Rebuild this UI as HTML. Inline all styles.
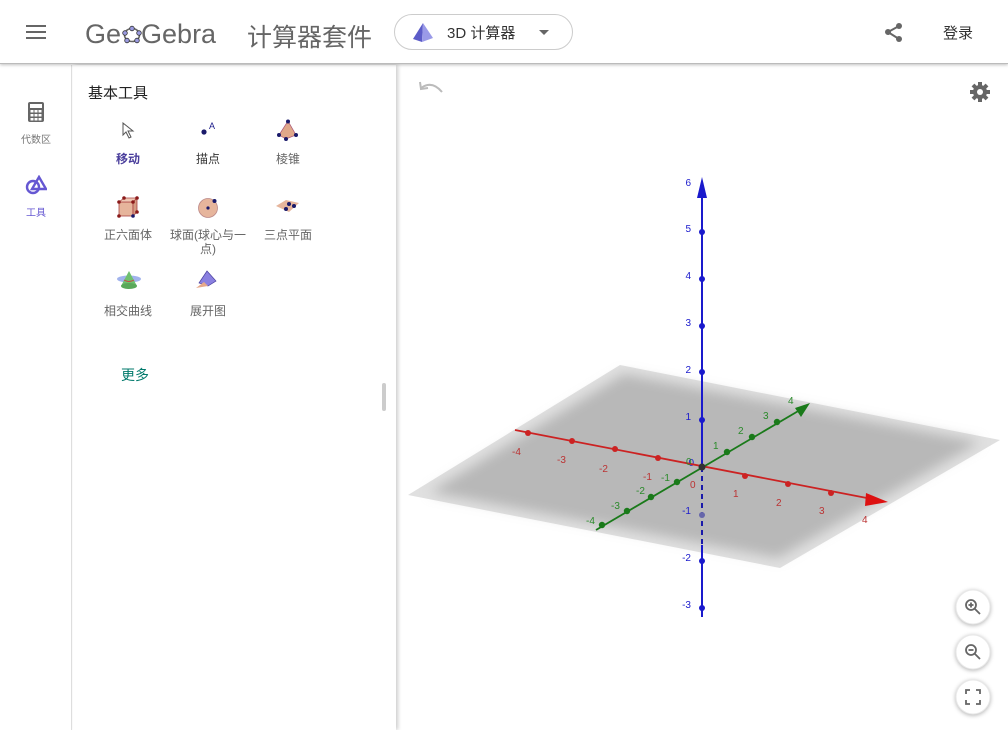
<!DOCTYPE html>
<html><head><meta charset="utf-8"><style>
*{margin:0;padding:0;box-sizing:border-box}
body{width:1008px;height:730px;overflow:hidden;background:#fff;font-family:"Liberation Sans","Noto Sans CJK SC",sans-serif;position:relative}
.hdr{position:absolute;left:0;top:0;width:1008px;height:64px;background:#fff;border-bottom:1px solid #bbb;box-shadow:0 1px 3px rgba(0,0,0,.25);z-index:5}
.abs{position:absolute}
.rail{position:absolute;left:0;top:65px;width:72px;height:665px;background:#fff;border-right:1px solid #e0e0e0}
.panel{position:absolute;left:73px;top:65px;width:323px;height:665px;background:#fff;box-shadow:2px 0 4px rgba(0,0,0,.2)}
.tl{position:absolute;font-size:12px;color:#666;text-align:center;width:80px;line-height:14px}
</style></head><body>
<div class="hdr">
 <div class="abs" style="left:26px;top:25px;width:20px;height:2px;background:#666"></div>
 <div class="abs" style="left:26px;top:31px;width:20px;height:2px;background:#666"></div>
 <div class="abs" style="left:26px;top:37px;width:20px;height:2px;background:#666"></div>
 <div class="abs" style="left:85px;top:21px;font-size:27px;line-height:27px;color:#666;white-space:nowrap">Ge<span style="display:inline-block;width:20px"></span>Gebra</div>
 <svg class="abs" style="left:121px;top:23px" width="22" height="22"><ellipse cx="11" cy="12" rx="7.5" ry="6.5" fill="none" stroke="#666" stroke-width="1.6"/><g fill="#9a9ae0" stroke="#333" stroke-width=".8"><circle cx="11" cy="5.5" r="2.3"/><circle cx="4" cy="10" r="2.3"/><circle cx="18" cy="10" r="2.3"/><circle cx="6" cy="17.5" r="2.3"/><circle cx="16" cy="17.5" r="2.3"/></g></svg>
 <div class="abs" style="left:247px;top:18px;font-size:25px;color:#666">计算器套件</div>
 <div class="abs" style="left:394px;top:14px;width:179px;height:36px;border:1px solid #ccc;border-radius:18px"></div>
 <svg class="abs" style="left:410px;top:21px" width="26" height="22"><polygon points="13,2 3,18 12,21" fill="#5c5cc8"/><polygon points="13,2 12,21 23,17" fill="#9a9ae8"/></svg>
 <div class="abs" style="left:447px;top:22px;font-size:15px;color:#333">3D 计算器</div>
 <div class="abs" style="left:539px;top:30px;border-left:5px solid transparent;border-right:5px solid transparent;border-top:5px solid #666"></div>
 <svg class="abs" style="left:884px;top:22px" width="22" height="22" fill="#666"><circle cx="15" cy="4" r="3"/><circle cx="4" cy="10" r="3"/><circle cx="15" cy="17" r="3"/><path d="M15 4L4 10L15 17" stroke="#666" stroke-width="2" fill="none"/></svg>
 <div class="abs" style="left:943px;top:22px;font-size:15px;color:#333">登录</div>
</div>
<div class="rail">
 <svg class="abs" style="left:28px;top:37px" width="16" height="20"><rect x="0" y="0" width="16" height="20" rx="2" fill="#666"/><rect x="2" y="2" width="12" height="4" fill="#fff"/><g fill="#fff"><rect x="2.5" y="8" width="3" height="2.5"/><rect x="6.5" y="8" width="3" height="2.5"/><rect x="10.5" y="8" width="3" height="2.5"/><rect x="2.5" y="12" width="3" height="2.5"/><rect x="6.5" y="12" width="3" height="2.5"/><rect x="10.5" y="12" width="3" height="2.5"/><rect x="2.5" y="16" width="3" height="2.5"/><rect x="6.5" y="16" width="3" height="2.5"/><rect x="10.5" y="16" width="3" height="2.5"/></g></svg>
 <div class="abs" style="left:0;top:66px;width:72px;text-align:center;font-size:10px;color:#777">代数区</div>
 <svg class="abs" style="left:25px;top:110px" width="22" height="20" stroke="#6557d2" stroke-width="2.4" fill="none"><circle cx="8" cy="12" r="6"/><polygon points="14,2 21,14 7,14"/></svg>
 <div class="abs" style="left:0;top:139px;width:72px;text-align:center;font-size:10px;color:#6557d2">工具</div>
</div>
<div class="panel">
 <div class="abs" style="left:15px;top:17px;font-size:15px;color:#222">基本工具</div>
 <svg class="abs" style="left:49px;top:57px" width="14" height="18"><path d="M1 1L1 13L4 10L7 16L9 15L6 9L11 9Z" fill="#fff" stroke="#555" stroke-width="1"/></svg>
 <div class="tl" style="left:15px;top:87px;color:#4a3e9c;font-weight:bold">移动</div>
 <svg class="abs" style="left:125px;top:55px" width="20" height="20"><circle cx="6" cy="12" r="2.6" fill="#1a1a6a"/><text x="11" y="9" font-size="9" fill="#1a1a8a" font-family="Liberation Sans">A</text></svg>
 <div class="tl" style="left:95px;top:87px;color:#333">描点</div>
 <svg class="abs" style="left:203px;top:54px" width="24" height="22"><polygon points="12,2 3,16 10,20 20,16" fill="#e0a88a" stroke="#a57" stroke-width=".7"/><circle cx="12" cy="2.5" r="2" fill="#1a1a6a"/><circle cx="3" cy="16" r="2" fill="#1a1a6a"/><circle cx="10" cy="20" r="2" fill="#1a1a6a"/><circle cx="20" cy="16" r="2" fill="#1a1a6a"/></svg>
 <div class="tl" style="left:175px;top:87px">棱锥</div>
 <svg class="abs" style="left:43px;top:131px" width="24" height="22"><rect x="3" y="6" width="14" height="14" fill="#e6b59c" stroke="#a44" stroke-width=".8"/><polygon points="3,6 8,2 21,2 17,6" fill="#efc8b4" stroke="#a44" stroke-width=".8"/><polygon points="17,6 21,2 21,16 17,20" fill="#d49c84" stroke="#a44" stroke-width=".8"/><g fill="#8a1a1a"><circle cx="3" cy="6" r="1.8"/><circle cx="8" cy="2" r="1.8"/><circle cx="21" cy="2" r="1.8"/><circle cx="17" cy="6" r="1.8"/><circle cx="3" cy="20" r="1.8"/><circle cx="21" cy="16" r="1.8"/></g><circle cx="17" cy="20" r="1.8" fill="#1a1a6a"/></svg>
 <div class="tl" style="left:15px;top:163px">正六面体</div>
 <svg class="abs" style="left:124px;top:131px" width="24" height="22"><circle cx="11" cy="12" r="9.5" fill="#e6b59c" stroke="#b88" stroke-width=".8"/><circle cx="11" cy="12" r="1.6" fill="#1a1a6a"/><circle cx="17.5" cy="5" r="2" fill="#1a1a6a"/></svg>
 <div class="tl" style="left:95px;top:163px">球面(球心与一<br>点)</div>
 <svg class="abs" style="left:202px;top:133px" width="26" height="16"><polygon points="1,8 11,2 24,5 14,14" fill="#e6b59c"/><circle cx="11" cy="11" r="2" fill="#1a1a6a"/><circle cx="14" cy="6" r="2" fill="#1a1a6a"/><circle cx="19" cy="8" r="2" fill="#1a1a6a"/></svg>
 <div class="tl" style="left:175px;top:163px">三点平面</div>
 <svg class="abs" style="left:43px;top:205px" width="26" height="22"><ellipse cx="13" cy="9" rx="12" ry="3.5" fill="#8aa0e8" opacity=".8"/><polygon points="13,1 5,16 21,16" fill="#6fbf6f"/><ellipse cx="13" cy="16" rx="8" ry="3" fill="#5aa85a"/><path d="M8 10Q13 13 18 10" stroke="#c44" fill="none"/></svg>
 <div class="tl" style="left:15px;top:239px">相交曲线</div>
 <svg class="abs" style="left:121px;top:204px" width="26" height="22"><polygon points="13,2 5,14 14,17 22,12" fill="#8a80e0" stroke="#4a40a0" stroke-width=".7"/><polygon points="2,19 10,13 14,17" fill="#e6a88a"/><polygon points="22,12 26,8 18,16" fill="#e6a88a"/></svg>
 <div class="tl" style="left:95px;top:239px">展开图</div>
 <div class="abs" style="left:48px;top:300px;font-size:14px;color:#00796b">更多</div>
 <div class="abs" style="left:309px;top:318px;width:4px;height:28px;background:#ccc;border-radius:2px"></div>
</div>
<svg class="abs" style="left:0;top:0" width="1008" height="730">
 <defs><filter id="bl" x="-20%" y="-20%" width="140%" height="140%"><feGaussianBlur stdDeviation="6"/></filter></defs>
 <path d="M421 88 Q432 80 442 92" stroke="#bbb" stroke-width="2" fill="none"/><path d="M420 82 L421 89 L428 88" stroke="#bbb" stroke-width="2" fill="none"/>
 <g transform="translate(980,92)" fill="#666"><circle r="7"/><g stroke="#666" stroke-width="4"><line x1="0" y1="-10" x2="0" y2="10"/><line x1="-10" y1="0" x2="10" y2="0"/><line x1="-7" y1="-7" x2="7" y2="7"/><line x1="-7" y1="7" x2="7" y2="-7"/></g><circle r="3" fill="#fff"/></g>
 <polygon points="408,495 620,365 1000,440 780,568" fill="#e0e0e0"/>
 <polygon points="430,492 624,374 980,442 778,558" fill="#b8b8b8" filter="url(#bl)"/>
 <line x1="702" y1="195" x2="702" y2="467" stroke="#1a1acc" stroke-width="2"/>
 <line x1="702" y1="467" x2="702" y2="545" stroke="#1a1aaa" stroke-width="2" stroke-dasharray="5,4"/>
 <line x1="702" y1="545" x2="702" y2="617" stroke="#1a1acc" stroke-width="2"/>
 <polygon points="702,177 697,198 707,198" fill="#1a1acc"/>
 <g fill="#1a1acc"><circle cx="702" cy="232" r="3"/><circle cx="702" cy="279" r="3"/><circle cx="702" cy="326" r="3"/><circle cx="702" cy="372" r="3"/><circle cx="702" cy="420" r="3"/><circle cx="702" cy="515" r="3" fill="#6666aa"/><circle cx="702" cy="561" r="3"/><circle cx="702" cy="608" r="3"/></g>
 <g font-size="10" fill="#1a1acc" font-family="Liberation Sans" text-anchor="end"><text x="691" y="186">6</text><text x="691" y="232">5</text><text x="691" y="279">4</text><text x="691" y="326">3</text><text x="691" y="373">2</text><text x="691" y="420">1</text><text x="694" y="466">0</text><text x="691" y="514">-1</text><text x="691" y="561">-2</text><text x="691" y="608">-3</text></g>
 <line x1="515" y1="430" x2="872" y2="499" stroke="#cc2222" stroke-width="1.8"/>
 <polygon points="888,502 866,493 865,506" fill="#dd1111"/>
 <g fill="#cc2222"><circle cx="528" cy="433" r="3"/><circle cx="572" cy="441" r="3"/><circle cx="615" cy="449" r="3"/><circle cx="658" cy="458" r="3"/><circle cx="745" cy="476" r="3"/><circle cx="788" cy="484" r="3"/><circle cx="831" cy="493" r="3"/></g>
 <g font-size="10" fill="#b33" font-family="Liberation Sans"><text x="512" y="455">-4</text><text x="557" y="463">-3</text><text x="599" y="472">-2</text><text x="643" y="480">-1</text><text x="690" y="488">0</text><text x="733" y="497">1</text><text x="776" y="506">2</text><text x="819" y="514">3</text><text x="862" y="523">4</text></g>
 <line x1="596" y1="530" x2="800" y2="410" stroke="#1a7a1a" stroke-width="1.8"/>
 <polygon points="810,403 795,408 801,417" fill="#1a7a1a"/>
 <g fill="#1a7a1a"><circle cx="602" cy="525" r="3.2"/><circle cx="627" cy="511" r="3.2"/><circle cx="651" cy="497" r="3.2"/><circle cx="677" cy="482" r="3.2"/><circle cx="727" cy="452" r="3.2"/><circle cx="752" cy="437" r="3.2"/><circle cx="777" cy="422" r="3.2"/><circle cx="702" cy="467" r="3.5" fill="#333"/></g>
 <g font-size="10" fill="#2a8a2a" font-family="Liberation Sans"><text x="586" y="524">-4</text><text x="611" y="509">-3</text><text x="636" y="494">-2</text><text x="661" y="481">-1</text><text x="686" y="465">0</text><text x="713" y="449">1</text><text x="738" y="434">2</text><text x="763" y="419">3</text><text x="788" y="404">4</text></g>
 <g stroke="#e8e8e8" fill="#fff"><circle cx="973" cy="607" r="17" style="filter:drop-shadow(0 1px 2px rgba(0,0,0,.3))"/><circle cx="973" cy="652" r="17" style="filter:drop-shadow(0 1px 2px rgba(0,0,0,.3))"/><circle cx="973" cy="697" r="17" style="filter:drop-shadow(0 1px 2px rgba(0,0,0,.3))"/></g>
 <g stroke="#666" stroke-width="1.8" fill="none"><circle cx="971" cy="605" r="5"/><line x1="975" y1="609" x2="980" y2="614"/><line x1="968.5" y1="605" x2="973.5" y2="605"/><line x1="971" y1="602.5" x2="971" y2="607.5"/>
 <circle cx="971" cy="650" r="5"/><line x1="975" y1="654" x2="980" y2="659"/><line x1="968.5" y1="650" x2="973.5" y2="650"/>
 <path d="M966 694V690H970M976 690H980V694M980 700V704H976M970 704H966V700"/></g>
</svg>
</body></html>
